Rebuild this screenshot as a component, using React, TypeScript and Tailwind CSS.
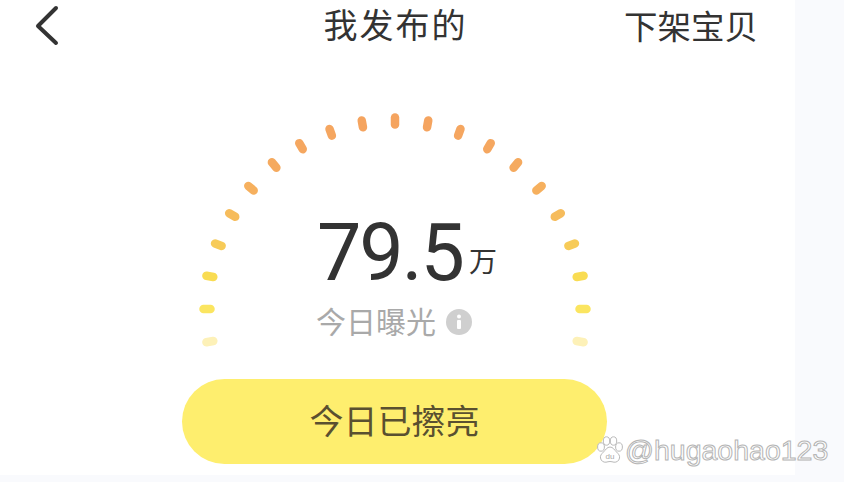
const FONT = '[font-family:"Noto_Sans_CJK_SC","Noto_Sans",sans-serif]';

const TICK_COLORS = [
  '#f5a45f', '#f5a45f', '#f5a660', '#f5a760', '#f5aa5f', '#f6b05e',
  '#f6bc5c', '#f7cb58', '#f9dc52', '#fbe560', '#fdf1b8',
];

function Gauge() {
  const cx = 200;
  const cy = 199;
  const r = 188;
  const ticks = [];
  for (let i = -10; i <= 10; i++) {
    const a = (i * 10 * Math.PI) / 180;
    const sin = Math.sin(a);
    const cos = Math.cos(a);
    ticks.push(
      <line
        key={i}
        x1={cx + (r - 3.5) * sin}
        y1={cy - (r - 3.5) * cos}
        x2={cx + (r + 3.5) * sin}
        y2={cy - (r + 3.5) * cos}
        stroke={TICK_COLORS[Math.abs(i)]}
        strokeWidth={8.5}
        strokeLinecap="round"
      />
    );
  }
  return (
    <svg width="400" height="240" viewBox="0 0 400 240" className="block">
      {ticks}
    </svg>
  );
}

function PawLogo() {
  return (
    <svg width="28" height="28" viewBox="0 0 28 28" className="shrink-0">
      <g fill="#fff" stroke="#b9b9b9" strokeWidth="1">
        <ellipse cx="5" cy="11" rx="3.4" ry="4.2" />
        <ellipse cx="10.5" cy="5" rx="3.2" ry="4.2" />
        <ellipse cx="17.5" cy="5" rx="3.2" ry="4.2" />
        <ellipse cx="23" cy="11" rx="3.4" ry="4.2" />
        <path d="M14 11c-3 0-4.500 3-6.500 5-2 2-3.500 3.500-3 6 .5 3 3 4.500 5.500 4.200 1.500-.2 2.500-.7 4-.7s2.500.5 4 .7c2.500.3 5-1.200 5.500-4.200.5-2.500-1-4-3-6-2-2-3.500-5-6.500-5z" />
      </g>
      <text x="14" y="23" textAnchor="middle" fontSize="8" fill="#a8a8a8" fontFamily="Liberation Sans, sans-serif">
        du
      </text>
    </svg>
  );
}

export default function App() {
  return (
    <div className={`relative h-[482px] w-[844px] overflow-hidden bg-[#f9fafd] ${FONT}`}>
      <div className="flex h-[475px] w-[795px] flex-col bg-white">
        <header className="relative flex h-[52px] shrink-0 items-center justify-center">
          <svg width="30" height="44" viewBox="0 0 30 44" className="absolute left-[32px] top-[4px]">
            <path d="M24 4 L6 22 L24 39" fill="none" stroke="#333" strokeWidth="4" strokeLinecap="round" strokeLinejoin="round" />
          </svg>
          <h1 className="ml-[-4px] mt-[-4px] text-[34px] font-normal leading-none tracking-[2px] text-[#333]">我发布的</h1>
          <span className="absolute left-[624px] top-[8px] text-[33.500px] leading-none text-[#333]">下架宝贝</span>
        </header>

        <div className="relative ml-[195px] mt-[58px] h-[240px] w-[400px]">
          <Gauge />
          <div className="absolute inset-x-0 top-[103px] flex flex-col items-center">
            <div className="ml-[24px] flex items-end text-[#333]">
              <span className="font-['Roboto'] text-[79px] font-normal leading-[80px] tracking-[-2px]">79.5</span>
              <span className="mb-[19px] ml-[6px] text-[28px] leading-none">万</span>
            </div>
            <div className="ml-[-2px] mt-[8px] flex items-center gap-[10px] text-[#a9a9a9]">
              <span className="text-[30px] leading-[38px]">今日曝光</span>
              <svg width="26" height="26" viewBox="0 0 26 26" className="mt-[4px]">
                <circle cx="13" cy="13" r="13" fill="#cfcfcf" />
                <circle cx="13" cy="7.500" r="2" fill="#fff" />
                <rect x="11" y="11" width="4" height="9" rx="1" fill="#fff" />
              </svg>
            </div>
          </div>
        </div>

        <button className="ml-[182px] mt-[29px] flex h-[85px] w-[425px] items-center justify-center rounded-full bg-[#feee6e] pb-[4px] text-[34px] leading-none text-[#5a5030]">
          今日已擦亮
        </button>
      </div>

      <div className="absolute left-[596px] top-[436px] flex items-center gap-[1px]">
        <PawLogo />
        <span className="font-['Liberation_Sans'] text-[28.5px] leading-none text-white [-webkit-text-stroke:1px_#b4b4b4]">
          @hugaohao123
        </span>
      </div>
    </div>
  );
}
